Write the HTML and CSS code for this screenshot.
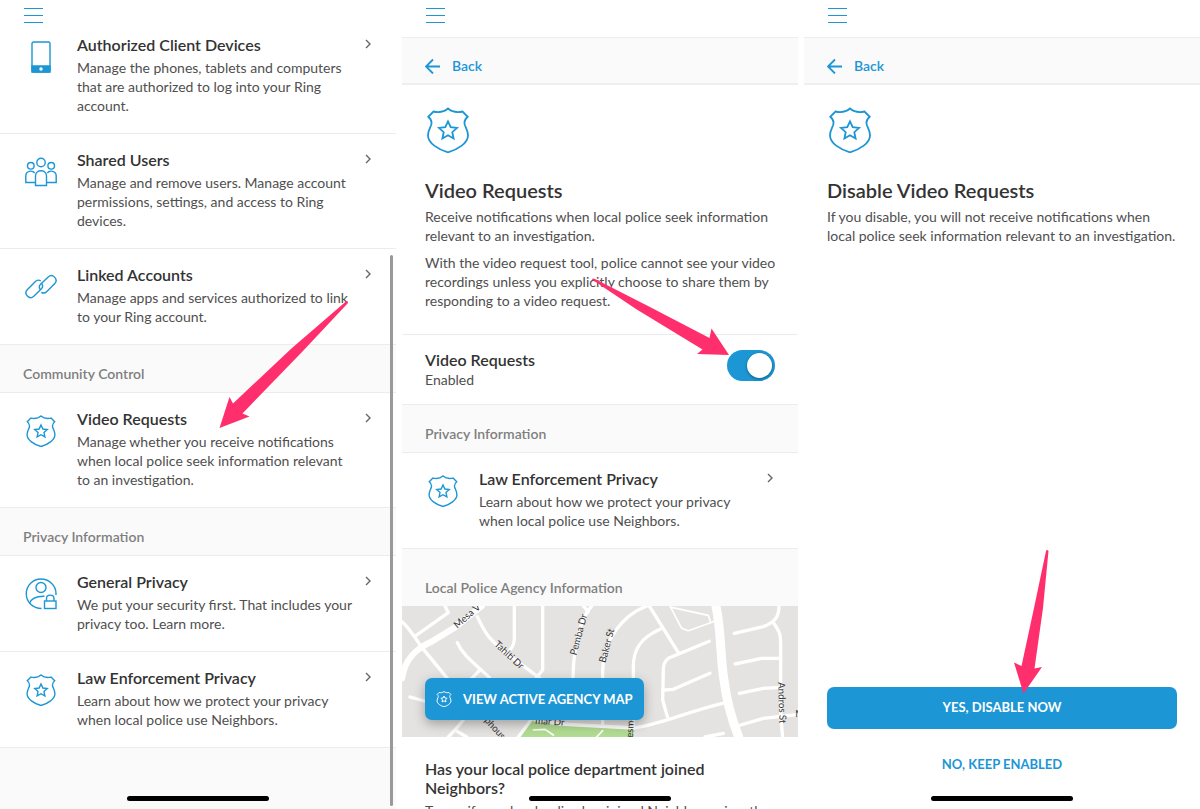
FILE: index.html
```html
<!DOCTYPE html>
<html lang="en">
<head>
    <meta charset="UTF-8">
    <meta name="viewport" content="width=device-width, initial-scale=1.0">
    <title>Control Center</title>
    <link rel="stylesheet" href="styles.css">
</head>
<body>
    <svg class="sprite" aria-hidden="true">
        <symbol id="shield" viewBox="0 0 46 46">
            <path d="M23 1.500C19 5 13 5.500 8.500 4.500L3.300 9.800C6.500 12.500 7.300 15 6 18.500C4.500 22 3 24 3 28.500C3 36 13 42.500 23 45.300C33 42.500 43 36 43 28.500C43 24 41.500 22 40 18.500C38.700 15 39.500 12.500 42.700 9.800L37.500 4.500C33 5.500 27 5 23 1.500Z"/>
            <path d="M23 14.300l2.700 5.900 6.300.7-4.700 4.300 1.300 6.300-5.600-3.200-5.600 3.200 1.300-6.300-4.700-4.300 6.300-.7z"/>
        </symbol>
        <symbol id="chevron" viewBox="0 0 8 10">
            <path d="M2 1l4 4-4 4"/>
        </symbol>
        <symbol id="arrow-left" viewBox="0 0 16 16">
            <path d="M15 8.500H1.500M8 1.500l-7 7 7 7"/>
        </symbol>
        <symbol id="menu" viewBox="0 0 20 16">
            <path d="M0 1.500h19M0 8.500h19M0 15.500h19"/>
        </symbol>
    </svg>

    <main class="screens">
        <section class="screen">
            <header class="topbar">
                <button class="menu" aria-label="Menu"><svg width="20" height="16"><use href="#menu"/></svg></button>
            </header>
            <div class="list scrolled">
                <a class="row" href="#">
                    <svg class="icon" viewBox="0 0 32 32">
                        <rect x="7" y="1" width="18" height="30" rx="1.500"/>
                        <path class="fill" d="M7 25h18v6H7z"/>
                        <circle class="hole" cx="16" cy="28" r="1.700"/>
                    </svg>
                    <span class="text">
                        <strong>Authorized Client Devices</strong>
                        <span>Manage the phones, tablets and computers that are authorized to log into your Ring account.</span>
                    </span>
                    <svg class="chevron"><use href="#chevron"/></svg>
                </a>
                <a class="row" href="#">
                    <svg class="icon" viewBox="0 0 32 32">
                        <circle cx="16" cy="6.500" r="4.200"/>
                        <circle cx="5.800" cy="9.800" r="3.300"/>
                        <circle cx="26.200" cy="9.800" r="3.300"/>
                        <path d="M10.500 29.500V20c0-7 11-7 11 0v9.500z"/>
                        <path d="M10.500 26.500H.8V20c0-5.500 6.700-6 8.900-3M21.500 26.500h9.700V20c0-5.500-6.700-6-8.900-3"/>
                    </svg>
                    <span class="text">
                        <strong>Shared Users</strong>
                        <span>Manage and remove users. Manage account permissions, settings, and access to Ring devices.</span>
                    </span>
                    <svg class="chevron"><use href="#chevron"/></svg>
                </a>
                <a class="row" href="#">
                    <svg class="icon" viewBox="0 0 32 32">
                        <path d="M15.800 9.900c-2-1.200-4-.8-5.400.6L2.200 18.700c-3.800 4.300 2.200 10.500 6.600 6.600l7.400-7.200c1.800-1.900 1.800-4.200.2-6"/>
                        <path d="M16.300 21.500c1.900.8 3.900.6 5.300-.8l8.200-8.200c3.800-4.300-2.200-10.500-6.600-6.600L15.800 13c-1.900 1.900-1.700 4.200-.3 5.700"/>
                    </svg>
                    <span class="text">
                        <strong>Linked Accounts</strong>
                        <span>Manage apps and services authorized to link to your Ring account.</span>
                    </span>
                    <svg class="chevron"><use href="#chevron"/></svg>
                </a>
                <h2 class="group">Community Control</h2>
                <a class="row" href="#">
                    <svg class="icon"><use href="#shield"/></svg>
                    <span class="text">
                        <strong>Video Requests</strong>
                        <span>Manage whether you receive notifications when local police seek information relevant to an investigation.</span>
                    </span>
                    <svg class="chevron"><use href="#chevron"/></svg>
                </a>
                <h2 class="group">Privacy Information</h2>
                <a class="row" href="#">
                    <svg class="icon" viewBox="0 0 32 32">
                        <path d="M16.500 30.500C8 30.500 1.300 24 1.300 15.700S8 1 16 1s15 6.500 15 14.500v1.500"/>
                        <circle cx="16" cy="9.500" r="5"/>
                        <path d="M4.500 25.500C6 20.500 11 18 19.500 18.200"/>
                        <rect x="19.500" y="23" width="11.500" height="7.500"/>
                        <path d="M21.500 23v-2.500c0-4.500 7.500-4.500 7.500 0V23"/>
                    </svg>
                    <span class="text">
                        <strong>General Privacy</strong>
                        <span>We put your security first. That includes your privacy too. Learn more.</span>
                    </span>
                    <svg class="chevron"><use href="#chevron"/></svg>
                </a>
                <a class="row" href="#">
                    <svg class="icon"><use href="#shield"/></svg>
                    <span class="text">
                        <strong>Law Enforcement Privacy</strong>
                        <span>Learn about how we protect your privacy when local police use Neighbors.</span>
                    </span>
                    <svg class="chevron"><use href="#chevron"/></svg>
                </a>
            </div>
            <div class="rest"></div>
            <div class="scrollbar"></div>
            <svg class="pointer pointer-row" viewBox="0 0 134 131"><path d="M129.500 2Q131 1.500 131 4L85 53 25.500 114.500l7 3-30 11.500 10-31 3.500 6.500L75 49z"/></svg>
            <div class="home"></div>
        </section>

        <section class="screen">
            <header class="topbar">
                <button class="menu" aria-label="Menu"><svg width="20" height="16"><use href="#menu"/></svg></button>
            </header>
            <nav class="backbar">
                <a class="back" href="#"><svg width="16" height="16"><use href="#arrow-left"/></svg>Back</a>
            </nav>
            <div class="intro">
                <svg class="badge"><use href="#shield"/></svg>
                <h1>Video Requests</h1>
                <p>Receive notifications when local police seek information relevant to an investigation.</p>
                <p>With the video request tool, police cannot see your video recordings unless you explicitly choose to share them by responding to a video request.</p>
            </div>
            <div class="setting">
                <label class="text" for="requests">
                    <strong>Video Requests</strong>
                    <span>Enabled</span>
                </label>
                <input class="switch" type="checkbox" id="requests" checked>
            </div>
            <h2 class="group">Privacy Information</h2>
            <a class="row" href="#">
                <svg class="icon"><use href="#shield"/></svg>
                <span class="text">
                    <strong>Law Enforcement Privacy</strong>
                    <span>Learn about how we protect your privacy when local police use Neighbors.</span>
                </span>
                <svg class="chevron"><use href="#chevron"/></svg>
            </a>
            <h2 class="group group-map">Local Police Agency Information</h2>
            <div class="map">
                <svg class="streets" viewBox="6 108 1188 393" preserveAspectRatio="xMidYMid slice">
                    <path class="park" d="M395 452L500 462 700 474V501H362z"/>
                    <path class="major" d="M6 325C15 265 50 235 95 215L165 172 245 108"/>
                    <path class="major wide" d="M948 108C965 190 960 260 972 330C980 400 1000 460 1016 501"/>
                    <g class="street">
                        <path d="M6 155C30 175 45 205 68 235L150 335M50 195L145 128 135 108M232 140C260 200 270 205 300 235L420 325"/>
                        <path d="M343 108V205Q343 225 330 240M428 108V300L410 322M172 218C185 250 210 270 268 322M240 300L215 325"/>
                        <path d="M550 108L565 125M575 108C545 140 520 220 519 325M740 108C670 135 608 210 608 300V465"/>
                        <path d="M748 108L835 248M780 178C720 205 700 240 700 290V470M928 214L805 265Q790 275 790 300L788 390 802 440M930 310L820 358 792 360"/>
                        <path d="M30 381L80 395M405 450L480 462 700 474C780 465 860 425 968 400M200 501L165 480 145 501M165 480L190 450M355 501L400 440"/>
                        <path d="M1003 190L1090 170C1130 155 1137 135 1137 108M1118 155C1145 190 1142 200 1142 250V440L1148 501M1005 282L1085 265H1142M1018 370L1090 355 1142 352M1022 465L1090 445 1190 434M915 501L970 490"/>
                    </g>
                    <path class="lane" d="M815 112L925 136 932 158 865 182 845 175 810 108M932 158L950 150M400 480L435 478 460 495M608 482L590 501"/>
                    <g class="names">
                        <text transform="translate(172 176) rotate(-41)">Mesa V</text>
                        <text transform="translate(281 225) rotate(43)">Tahiti Dr</text>
                        <text transform="translate(529 257) rotate(-75)">Pemba Dr</text>
                        <text transform="translate(616 280) rotate(-75)">Baker St</text>
                        <text transform="translate(1134 337) rotate(88)">Andros St</text>
                        <text transform="translate(252 452) rotate(48)">phous</text>
                        <text transform="translate(405 461) rotate(4)">mar Dr</text>
                        <text transform="translate(698 504) rotate(-86)">esme</text>
                        <text x="1186" y="440">M</text>
                    </g>
                </svg>
                <button class="button map-button"><svg width="16" height="16"><use href="#shield"/></svg>VIEW ACTIVE AGENCY MAP</button>
            </div>
            <div class="question">
                <h3>Has your local police department joined Neighbors?</h3>
                <p>To see if your local police has joined Neighbors, view the map.</p>
            </div>
            <svg class="pointer pointer-switch" viewBox="0 0 141 80"><path d="M2 2.500Q2 1 5 2L58 29 119.500 61l2-9.500L139 78l-32-1 5.500-4.500L46 32z"/></svg>
            <div class="home"></div>
        </section>

        <section class="screen">
            <header class="topbar">
                <button class="menu" aria-label="Menu"><svg width="20" height="16"><use href="#menu"/></svg></button>
            </header>
            <nav class="backbar">
                <a class="back" href="#"><svg width="16" height="16"><use href="#arrow-left"/></svg>Back</a>
            </nav>
            <div class="intro intro-last">
                <svg class="badge"><use href="#shield"/></svg>
                <h1>Disable Video Requests</h1>
                <p>If you disable, you will not receive notifications when local police seek information relevant to an investigation.</p>
            </div>
            <div class="actions">
                <button class="button">YES, DISABLE NOW</button>
                <button class="button button-plain">NO, KEEP ENABLED</button>
            </div>
            <svg class="pointer pointer-disable" viewBox="0 0 38 148"><path d="M34 3Q35 1 36.500 3L31 60 22.500 120.500 30 119 11.500 145.500 2 114.500 9.500 118 22 60z"/></svg>
            <div class="home"></div>
        </section>
    </main>
</body>
</html>
```
FILE: styles.css
```css
* {
    margin: 0;
    padding: 0;
    box-sizing: border-box;
}

body {
    background: #fff;
    color: #4f4f4f;
    font-family: Lato, sans-serif;
    font-size: 14px;
    line-height: 19px;
}

a {
    color: inherit;
    text-decoration: none;
}

button {
    border: none;
    background: none;
    font: inherit;
    cursor: pointer;
}

svg {
    display: block;
    flex: none;
    fill: none;
    stroke: #1c96d5;
}

symbol path {
    vector-effect: non-scaling-stroke;
}

.sprite {
    position: absolute;
    width: 0;
    height: 0;
}

.screens {
    display: grid;
    grid-template-columns: repeat(3, 1fr);
    gap: 6px;
}

.screen {
    position: relative;
    display: flex;
    flex-direction: column;
    height: 100vh;
    overflow: hidden;
}

.topbar {
    flex: none;
    height: 37px;
    padding: 7px 23px;
}

.menu {
    padding: 0 1px;
}

/* list rows */
.scrolled {
    margin-top: -18px;
}

.row {
    display: flex;
    flex: none;
    align-items: flex-start;
    padding: 15px 24px 18px 25px;
    border-bottom: 1px solid #ececec;
}

.icon {
    width: 32px;
    height: 32px;
    margin: 7px 20px 0 0;
    stroke-width: 1.4;
}

.icon .fill {
    fill: #1c96d5;
}

.icon .hole {
    fill: #fff;
    stroke: none;
}

.text {
    flex: 1;
}

.text strong,
.text span {
    display: block;
}

.text strong {
    color: #333;
    font-size: 16px;
    font-weight: 600;
    line-height: 20px;
}

.row .text strong {
    margin-bottom: 2px;
    line-height: 22px;
}

.chevron {
    width: 8px;
    height: 10px;
    margin: 5px 0 0 8px;
    stroke: #666;
    stroke-width: 1.4;
}

.group {
    flex: none;
    padding: 19px 23px 9px;
    border-bottom: 1px solid #ececec;
    background: #fafafa;
    color: #7f7f7f;
    font-size: 14px;
    font-weight: 600;
}

.group-map {
    padding-top: 29px;
    border-bottom: none;
}

.rest {
    flex: 1;
    background: #fafafa;
}

.scrollbar {
    position: absolute;
    top: 255px;
    right: 3px;
    bottom: 3px;
    width: 3px;
    border-radius: 2px;
    background: #999;
}

.home {
    position: absolute;
    bottom: 8px;
    left: calc(50% - 71px);
    width: 142px;
    height: 5px;
    border-radius: 3px;
    background: #000;
}

/* detail screens */
.backbar {
    flex: none;
    padding: 18px 23px 8px;
    border-top: 1px solid #ececec;
    border-bottom: 2px solid #efefef;
    background: #fafafa;
}

.back {
    display: flex;
    align-items: center;
    gap: 11px;
    color: #1c96d5;
    font-weight: 600;
}

.back svg {
    stroke-width: 1.8;
}

.intro {
    flex: none;
    padding: 22px 20px 16px 23px;
    border-bottom: 1px solid #ececec;
}

.intro-last {
    border-bottom: none;
}

.badge {
    width: 46px;
    height: 46px;
    margin-bottom: 24px;
    stroke-width: 1.8;
}

h1 {
    margin-bottom: 4px;
    color: #333;
    font-size: 20px;
    font-weight: 600;
    line-height: 26px;
}

.intro p {
    margin-bottom: 8px;
}

.setting {
    display: flex;
    flex: none;
    align-items: flex-start;
    padding: 15px 23px;
    border-bottom: 1px solid #ececec;
}

.switch {
    flex: none;
    width: 48px;
    height: 31px;
    padding: 3px;
    border-radius: 16px;
    background: #1c96d5;
    appearance: none;
    cursor: pointer;
}

.switch::before {
    content: "";
    display: block;
    width: 25px;
    height: 25px;
    border-radius: 50%;
    background: #fff;
    box-shadow: 0 1px 3px rgba(0, 0, 0, 0.4);
}

.switch:checked::before {
    margin-left: 17px;
}

.button {
    height: 42px;
    padding-bottom: 2px;
    border-radius: 7px;
    background: #1c96d5;
    color: #fff;
    font-size: 13px;
    font-weight: 700;
}

.button-plain {
    background: none;
    color: #1c96d5;
}

.map {
    position: relative;
    display: flex;
    flex: none;
    align-items: flex-end;
    height: 131px;
    padding: 0 23px 17px;
    background: #e4e3e1;
}

.streets {
    position: absolute;
    inset: 0;
    width: 100%;
    height: 100%;
    stroke: #fff;
    stroke-width: 10;
    stroke-linecap: round;
    stroke-linejoin: round;
}

.streets .park {
    fill: #b2dc93;
    stroke: none;
}

.streets .major {
    stroke-width: 19;
}

.streets .wide {
    stroke-width: 27;
}

.streets .lane {
    stroke-width: 5;
}

.names {
    fill: #333;
    stroke: none;
    font-size: 29px;
}

.map-button {
    position: relative;
    display: flex;
    align-items: center;
    gap: 11px;
    padding: 0 11px;
    box-shadow: 0 4px 12px rgba(0, 0, 0, 0.3);
}

.map-button svg {
    stroke: #fff;
}

.question {
    flex: none;
    padding: 22px 23px;
}

.question h3 {
    margin-bottom: 4px;
    color: #333;
    font-size: 16px;
    font-weight: 600;
}

.actions {
    display: flex;
    flex-direction: column;
    gap: 15px;
    margin-top: auto;
    padding: 0 23px 23px;
}

/* annotation arrows */
.pointer {
    position: absolute;
    fill: #ff2f6d;
    stroke: none;
}

.pointer-row {
    top: 299px;
    left: 217px;
    width: 134px;
}

.pointer-switch {
    top: 277px;
    right: 67px;
    width: 141px;
}

.pointer-disable {
    bottom: 113px;
    left: 208px;
    width: 38px;
}
```
